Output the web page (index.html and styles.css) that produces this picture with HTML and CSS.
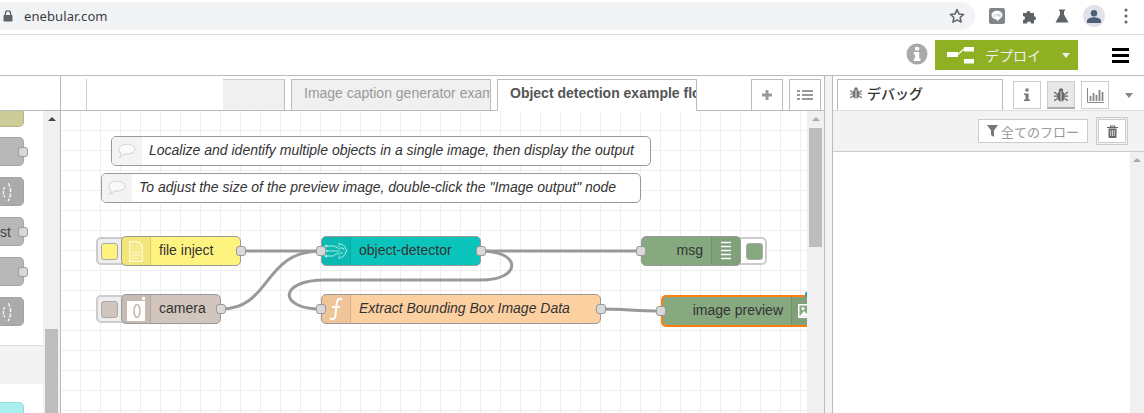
FILE: index.html
```html
<!DOCTYPE html>
<html lang="ja">
<head>
<meta charset="utf-8">
<title>enebular</title>
<link rel="stylesheet" href="styles.css">
</head>
<body>
<div class="chrome">
  <div class="omnibox">
    <svg class="lock" width="10" height="12" viewBox="0 0 10 12"><path d="M2.400 5V3.400a2.600 2.600 0 0 1 5.200 0V5" fill="none" stroke="#5f6368" stroke-width="1.300"/><rect x="0.500" y="5" width="9" height="6.500" rx="1" fill="#5f6368"/></svg>
    <span class="url">enebular.com</span>
    <svg class="star" width="16" height="16" viewBox="0 0 16 16"><path d="M8 1.600l1.900 4.300 4.700.5-3.500 3.100 1 4.600L8 11.800l-4.100 2.300 1-4.600L1.400 6.400l4.700-.5z" fill="none" stroke="#5f6368" stroke-width="1.500" stroke-linejoin="round"/></svg>
  </div>
  <div class="ext">
    <svg width="16" height="16" viewBox="0 0 16 16"><rect width="16" height="16" rx="2" fill="#80868b"/><path d="M8 2.800c3.100 0 5.500 1.900 5.500 4.300 0 2.300-3.300 4.500-5.500 6.100 0-1.200-.3-1.700-1.300-1.900C4.200 10.900 2.500 9.200 2.500 7.100 2.500 4.700 4.900 2.800 8 2.800z" fill="#fff"/><path d="M4.800 5.800v2.600h1.300M7 5.800v2.600M8.200 8.400V5.800l1.700 2.600V5.800M12 5.800h-1.300v2.600H12M10.700 7.100H12" fill="none" stroke="#b9bcbf" stroke-width=".6"/></svg>
    <svg width="16" height="16" viewBox="0 0 16 16"><path d="M1 5h3.500a2 2 0 1 1 4 0H12v3.200a2 2 0 1 1 0 4V15.500H9a2 2 0 1 0-4 0H1v-3.500a2 2 0 1 0 0-4z" fill="#5f6368"/></svg>
    <svg width="14" height="16" viewBox="0 0 14 16"><path d="M4 1.500h6v1.500H9v3.500L13.500 14.500H.5L5 6.500V3H4z" fill="#5f6368"/></svg>
    <span class="avatar"><svg width="14" height="14" viewBox="0 0 14 14"><circle cx="7" cy="4.200" r="3.200" fill="#4d5f75"/><path d="M0 14v-2c0-2.500 4-3.700 7-3.700s7 1.200 7 3.700v2z" fill="#4d5f75"/></svg></span>
    <svg width="4" height="16" viewBox="0 0 4 16"><circle cx="2" cy="2" r="1.500" fill="#5f6368"/><circle cx="2" cy="8" r="1.500" fill="#5f6368"/><circle cx="2" cy="14" r="1.500" fill="#5f6368"/></svg>
  </div>
</div>

<header class="topbar">
  <svg class="info" width="22" height="22" viewBox="0 0 22 22"><circle cx="11" cy="11" r="10.500" fill="#aaa"/><rect x="9" y="4" width="4.200" height="3.500" rx="1" fill="#fff"/><path d="M7.800 9h5.400v6.500h1.200V18H7.800v-2.500H9V11.500H7.800z" fill="#fff"/></svg>
  <div class="deploy">
    <svg class="deploy-icon" width="28" height="18" viewBox="0 0 28 18"><rect x="0" y="6" width="11" height="5" fill="#fff"/><rect x="17" y="1" width="10" height="4.500" fill="#fff"/><rect x="17" y="13" width="10" height="4.500" fill="#fff"/><path d="M11 8.500 L17 3" stroke="#fff" stroke-width="1.200" fill="none"/></svg>
    <span class="deploy-label">デプロイ</span>
    <span class="caret caret-white"></span>
  </div>
  <div class="burger"><i></i><i></i><i></i></div>
</header>

<main class="app">
  <aside class="palette">
    <div class="palette-head"></div>
    <div class="palette-main">
      <div class="palette-list">
        <div class="pnode pnode-first"></div>
        <div class="pnode"><b class="pport"></b></div>
        <div class="pnode pnode-dark"><svg width="10" height="20" viewBox="0 0 10 20"><path d="M2.500 5C1 8 1 12 2.500 15" stroke="#fff" stroke-width="1.300" stroke-dasharray="3 1.200" fill="none"/><path d="M6 1C9.500 6 9.500 14 6 19" stroke="#fff" stroke-width="1.300" stroke-dasharray="4 1.500" fill="none"/></svg></div>
        <div class="pnode pnode-text"><span>st</span><b class="pport"></b></div>
        <div class="pnode"><b class="pport"></b></div>
        <div class="pnode pnode-dark"><svg width="10" height="20" viewBox="0 0 10 20"><path d="M2.500 5C1 8 1 12 2.500 15" stroke="#fff" stroke-width="1.300" stroke-dasharray="3 1.200" fill="none"/><path d="M6 1C9.500 6 9.500 14 6 19" stroke="#fff" stroke-width="1.300" stroke-dasharray="4 1.500" fill="none"/></svg></div>
        <div class="pcat"></div>
        <div class="pnode pnode-cyan"></div>
      </div>
      <div class="vscroll vscroll-palette"><span class="up"></span><span class="thumb"></span></div>
    </div>
  </aside>

  <section class="workspace">
    <div class="tabbar">
      <div class="tab tab-blank"><span class="tab-blank-grey"></span></div>
      <div class="tab tab-grey"><span>Image caption generator example flow</span></div>
      <div class="tab tab-active"><span>Object detection example flow</span></div>
      <div class="tab-btn tab-btn-add"><svg width="12" height="12" viewBox="0 0 12 12"><path d="M6 1v10M1 6h10" stroke="#999" stroke-width="3"/></svg></div>
      <div class="tab-btn"><svg width="16" height="12" viewBox="0 0 16 12"><path d="M5 2h11M5 6h11M5 10h11M0 2h3M0 6h3M0 10h3" stroke="#999" stroke-width="2"/></svg></div>
    </div>
    <div class="canvas-row">
      <div class="canvas">
        <svg class="wires" width="760" height="302" viewBox="61 111 760 302">
          <g fill="none" stroke="#999" stroke-width="3">
            <path d="M241 251 L321 251"/>
            <path d="M221 309 C272 309 262 251 321 251"/>
            <path d="M481 251 C522 251 522 280 481 280 L325 280 C278 280 278 309 321 309"/>
            <path d="M481 251 L641 251"/>
            <path d="M601 309 C625 309 635 311 661 311"/>
          </g>
        </svg>

        <div class="comment c1"><span class="c-ico"><svg width="20" height="18" viewBox="0 0 22 20"><path d="M11 2.500c5 0 9 2.300 9 5.500s-4 5.500-9 5.500c-1 0-2 0-3-.3C6.500 15 4.500 16.500 2.500 17c1-1 1.700-2.500 1.800-4.500C2.800 11.500 2 9.800 2 8c0-3.200 4-5.500 9-5.500z" fill="#fafafa" stroke="#d8d8d8" stroke-width="1.200"/></svg></span><span class="c-txt">Localize and identify multiple objects in a single image, then display the output</span></div>
        <div class="comment c2"><span class="c-ico"><svg width="20" height="18" viewBox="0 0 22 20"><path d="M11 2.500c5 0 9 2.300 9 5.500s-4 5.500-9 5.500c-1 0-2 0-3-.3C6.500 15 4.500 16.500 2.500 17c1-1 1.700-2.500 1.800-4.500C2.800 11.500 2 9.800 2 8c0-3.200 4-5.500 9-5.500z" fill="#fafafa" stroke="#d8d8d8" stroke-width="1.200"/></svg></span><span class="c-txt">To adjust the size of the preview image, double-click the "Image output" node</span></div>

        <div class="btn-l b-inject"><i class="yellow"></i></div>
        <div class="node n-inject"><span class="n-ico"><svg width="14" height="21" viewBox="0 0 14 21"><path d="M.7.700h8.500l4.100 4.100v15.500H.7z" fill="rgba(255,255,255,.15)" stroke="#fffbd0" stroke-width="1.300"/><path d="M3 11h8M3 14h8M3 17h6" fill="none" stroke="#fffbd0" stroke-width="1"/></svg></span><span class="n-lab">file inject</span><b class="port pr"></b></div>

        <div class="btn-l b-camera"><i class="brown"></i></div>
        <div class="node n-camera"><span class="n-ico"><svg width="18" height="24" viewBox="0 0 18 24"><rect x="0" y="4" width="18" height="20" fill="#fff"/><rect x="15" y="0" width="3" height="3" fill="#fff"/><ellipse cx="10" cy="14" rx="3" ry="6.500" fill="none" stroke="#c8b9ae" stroke-width="1.600"/></svg></span><span class="n-lab">camera</span><b class="port pr"></b></div>

        <div class="node n-object"><b class="port pl"></b><span class="n-ico"><svg width="24" height="18" viewBox="0 0 24 18"><g fill="none" stroke="#d5f6f3" stroke-width=".8"><path d="M2 4h8l4 2M2 9h12M2 14h7l5-3"/><path d="M15 1v16" stroke-dasharray="1.500 1"/><path d="M15 2c4 0 6 1.500 6.500 4.500L23 9l-1.500 1c0 3-2 5-6.500 6"/><path d="M16 6h3l1 2M16 11h3"/><circle cx="2" cy="4" r="1"/><circle cx="2" cy="9" r="1"/><circle cx="2" cy="14" r="1"/></g></svg></span><span class="n-lab">object-detector</span><b class="port pr"></b></div>

        <div class="node n-func"><b class="port pl"></b><span class="n-ico"><svg width="14" height="24" viewBox="0 0 14 24"><path d="M13 2.500C9 .5 8 3 7.500 8L6.500 18C6 23 3 23 1 21M3 10h8" fill="none" stroke="#fff" stroke-width="2"/></svg></span><span class="n-lab n-it">Extract Bounding Box Image Data</span><b class="port pr"></b></div>

        <div class="btn-r b-msg"><i class="green"></i></div>
        <div class="node n-msg"><b class="port pl"></b><span class="n-lab n-right">msg</span><span class="n-ico n-ico-r"><svg width="12" height="20" viewBox="0 0 12 20"><path d="M1 1.500h10M1 5.500h10M1 9.500h10M1 13.500h10M1 17.500h10" stroke="#fff" stroke-width="1.600"/></svg></span></div>

        <div class="node n-preview"><b class="port pl"></b><span class="n-lab n-right">image preview</span><span class="n-ico n-ico-r"><svg width="18" height="16" viewBox="0 0 18 16"><rect x="1" y="1" width="16" height="14" fill="#fff"/><rect x="2.500" y="2.500" width="13" height="11" fill="#87a980"/><path d="M2.500 13.500 7 8l3 3 2-2 3.500 4.500z" fill="#fff"/><circle cx="6" cy="5.500" r="1.500" fill="#fff"/></svg></span></div>
        <span class="status-dot"></span>
      </div>
      <div class="vscroll vscroll-canvas"><span class="up"></span><span class="thumb"></span></div>
    </div>
  </section>

  <div class="sep"></div>

  <aside class="sidebar">
    <div class="side-tabs">
      <div class="side-tab">
        <svg width="12" height="12" viewBox="0 0 12 12"><g fill="#777"><ellipse cx="6" cy="7" rx="3.300" ry="4.500"/><circle cx="6" cy="2" r="1.800"/></g><path d="M0 3.500l3 2M12 3.500l-3 2M0 7h3M12 7H9M0 11l3-2M12 11L9 9" stroke="#777" stroke-width="1.100"/><path d="M6 3v8.500" stroke="#fff" stroke-width=".8"/></svg>
        <span>デバッグ</span>
      </div>
      <div class="side-btn"><svg width="8" height="14" viewBox="0 0 8 14"><rect x="2.500" y="0.500" width="3" height="3" fill="#777"/><path d="M1 5.500h4.500v6H7V13H1v-1.500h1.500v-4.500H1z" fill="#777"/></svg></div>
      <div class="side-btn side-btn-on"><svg width="14" height="14" viewBox="0 0 12 12"><g fill="#666"><ellipse cx="6" cy="7" rx="3.300" ry="4.500"/><circle cx="6" cy="2" r="1.800"/></g><path d="M0 3.500l3 2M12 3.500l-3 2M0 7h3M12 7H9M0 11l3-2M12 11L9 9" stroke="#666" stroke-width="1.100"/><path d="M6 3v8.500" stroke="#e8e8e8" stroke-width=".8"/></svg></div>
      <div class="side-btn"><svg width="17" height="15" viewBox="0 0 17 15"><path d="M.5 0v14.500H17" fill="none" stroke="#888"/><path d="M3.500 8v5M6.500 5v8M9.500 7v6M12.500 2v11M15.500 4v9" stroke="#888" stroke-width="1.800"/></svg></div>
      <span class="caret caret-grey"></span>
    </div>
    <div class="side-tools">
      <div class="filter"><svg width="11" height="12" viewBox="0 0 11 12"><path d="M0 0h11L7 5.500V12L4 10V5.500z" fill="#777"/></svg><span>全てのフロー</span></div>
      <div class="trash"><span><svg width="11" height="13" viewBox="0 0 11 13"><path d="M0 2.500h11M3.500 2.500V1h4v1.500" fill="none" stroke="#666" stroke-width="1.200"/><path d="M1.500 3.500h8v8.500a1 1 0 0 1-1 1h-6a1 1 0 0 1-1-1z" fill="#666"/><path d="M3.700 5v6M5.500 5v6M7.300 5v6" stroke="#fff" stroke-width=".7"/></svg></span></div>
    </div>
    <div class="side-body">
      <div class="vscroll vscroll-side"><span class="up"></span></div>
    </div>
  </aside>
</main>
</body>
</html>
```
FILE: styles.css
```css
* { box-sizing: border-box; }
html, body { margin: 0; padding: 0; }
body {
  width: 1144px;
  height: 413px;
  overflow: hidden;
  background: #fff;
  font-family: "Liberation Sans", "Noto Sans CJK JP", sans-serif;
  font-size: 14px;
  color: #333;
}

/* browser chrome */
.chrome {
  height: 35px;
  display: flex;
  align-items: flex-start;
  border-bottom: 1px solid #dadce0;
  padding-top: 2px;
}
.omnibox {
  width: 975px;
  height: 28px;
  background: #f1f3f4;
  border-radius: 0 14px 14px 0;
  display: flex;
  align-items: center;
  padding: 0 10px 0 3px;
}
.url {
  margin-left: 11px;
  font-family: "Noto Sans", sans-serif;
  font-size: 13px;
  letter-spacing: 0.1px;
  color: #3c4043;
}
.star { margin-left: auto; }
.ext {
  display: flex;
  align-items: center;
  height: 28px;
  margin-left: 14px;
}
.ext > svg:nth-child(1) { margin-right: 17px; }
.ext > svg:nth-child(2) { margin-right: 17px; }
.ext > svg:nth-child(3) { margin-right: 14px; }
.avatar {
  width: 22px;
  height: 22px;
  border-radius: 50%;
  background: #dfe3e9;
  display: flex;
  align-items: center;
  justify-content: center;
  margin-right: 19px;
}

/* editor header */
.topbar {
  height: 41px;
  display: flex;
  align-items: flex-start;
  border-bottom: 1px solid #bbb;
  padding-top: 5px;
}
.info { margin: 3px 7px 0 auto; }
.deploy {
  width: 143px;
  height: 30px;
  background: #8fb022;
  display: flex;
  align-items: center;
  color: #eee;
}
.deploy-icon { margin-left: 12px; }
.deploy-label { margin-left: 10px; font-size: 14px; }
.caret {
  width: 0;
  height: 0;
  border-left: 4px solid transparent;
  border-right: 4px solid transparent;
  border-top: 5px solid #eee;
}
.caret-white { margin-left: 21px; }
.burger {
  width: 17px;
  margin: 8px 15px 0 34px;
  display: flex;
  flex-direction: column;
  gap: 3px;
}
.burger i { display: block; height: 3px; background: #000; }

/* main layout */
.app {
  display: flex;
  height: 337px;
  overflow: hidden;
}

/* palette */
.palette {
  width: 61px;
  display: flex;
  flex-direction: column;
  border-right: 1px solid #bbb;
  flex: none;
}
.palette-head {
  height: 35px;
  flex: none;
  border-bottom: 1px solid #bbb;
}
.palette-main { flex: 1; display: flex; min-height: 0; }
.palette-list {
  width: 43px;
  flex: none;
  overflow: hidden;
}
.pnode {
  width: 24px;
  height: 29px;
  background: #b8b8b8;
  border: 1px solid #a3a3a3;
  border-left: 0;
  border-radius: 0 5px 5px 0;
  margin-bottom: 11px;
  position: relative;
  display: flex;
  align-items: center;
  justify-content: flex-end;
  padding-right: 11px;
}
.pnode-first {
  height: 16px;
  margin-bottom: 10px;
  background: #cccc99;
  border-color: #b5b58a;
  border-top: 0;
  border-radius: 0 0 5px 0;
}
.pnode-dark { background: #ababab; }
.pnode-text { justify-content: flex-start; padding: 0; font-size: 14px; color: #444; }
.pport {
  position: absolute;
  right: -5px;
  top: 9px;
  width: 10px;
  height: 10px;
  background: #d9d9d9;
  border: 1px solid #999;
  border-radius: 3px;
}
.pcat {
  height: 39px;
  width: 43px;
  margin: 19px 0 18px;
  background: #f3f3f3;
  border-top: 1px solid #ddd;
}
.pnode-cyan { background: #aaeeee; border-color: #98d8d8; }

.vscroll { background: #f0f0f0; position: relative; flex: none; }
.vscroll-palette { width: 17px; }
.vscroll-palette .thumb { top: 218px; bottom: 0; left: 2px; width: 13px; }
.thumb { position: absolute; background: #bdbdbd; display: block; }
.up {
  position: absolute;
  top: 6px;
  left: 50%;
  margin-left: -4px;
  width: 0;
  height: 0;
  border-left: 4px solid transparent;
  border-right: 4px solid transparent;
  border-bottom: 4px solid #444;
}

/* workspace */
.workspace {
  width: 764px;
  flex: none;
  display: flex;
  flex-direction: column;
  border-right: 1px solid #bbb;
}
.tabbar {
  height: 35px;
  flex: none;
  display: flex;
  align-items: flex-end;
  border-bottom: 1px solid #bbb;
  padding: 0 3px 0 25px;
}
.tab {
  height: 32px;
  margin-bottom: -1px;
  border: 1px solid #bbb;
  overflow: hidden;
  white-space: nowrap;
  font-size: 14px;
  line-height: 27px;
  width: 200px;
  flex: none;
}
.tab-blank {
  width: 199px;
  margin-right: 6px;
  border-top: 0;
  border-left: 1px solid #ccc;
  position: relative;
  background: #fff;
}
.tab-blank-grey {
  position: absolute;
  left: 136px;
  right: 0;
  top: 0;
  height: 100%;
  background: #f0f0f0;
  border-top: 1px solid #ccc;
}
.tab-grey {
  background: #f0f0f0;
  color: #999;
  margin-right: 6px;
  padding-left: 12px;
}
.tab-active {
  background: #fff;
  font-weight: 700;
  color: #555;
  border-bottom-color: #fff;
  padding-left: 12px;
}
.tab-btn {
  width: 32px;
  height: 31px;
  margin-left: 6px;
  border: 1px solid #bbb;
  border-bottom: 0;
  display: flex;
  align-items: center;
  justify-content: center;
  flex: none;
  background: #fff;
}
.tab-btn-add { margin-left: auto; }

.canvas-row { flex: 1; display: flex; min-height: 0; }
.canvas {
  width: 746px;
  position: relative;
  overflow: hidden;
  background-color: #fff;
  background-image:
    linear-gradient(#eee 1px, transparent 1px),
    linear-gradient(90deg, #eee 1px, transparent 1px);
  background-size: 20px 20px;
  background-position: 19px 19px;
}
.vscroll-canvas { width: 17px; }
.vscroll-canvas .up { border-bottom-color: #aaa; }
.vscroll-canvas .thumb { top: 17px; height: 119px; left: 2px; width: 13px; }

.wires { position: absolute; left: 0; top: 0; }

/* comments: positions on the flow canvas */
.comment {
  position: absolute;
  width: 540px;
  height: 30px;
  background: #fff;
  border: 1px solid #999;
  border-radius: 5px;
  display: flex;
  align-items: center;
  overflow: hidden;
  font-style: italic;
  color: #333;
  white-space: nowrap;
}
.c1 { left: 50px; top: 25px; }
.c2 { left: 40px; top: 62px; }
.c-ico {
  width: 30px;
  height: 100%;
  background: #f3f3f3;
  display: flex;
  align-items: center;
  justify-content: center;
  flex: none;
}
.c-txt { margin-left: 7px; padding-bottom: 2px; }

/* nodes */
.node {
  position: absolute;
  height: 30px;
  border: 1px solid #999;
  border-radius: 5px;
  display: flex;
  align-items: center;
  white-space: nowrap;
  color: #333;
}
.n-ico {
  width: 29px;
  height: 100%;
  flex: none;
  display: flex;
  align-items: center;
  justify-content: center;
  background: rgba(0, 0, 0, 0.05);
  border-right: 1px solid rgba(0, 0, 0, 0.1);
  border-radius: 4px 0 0 4px;
}
.n-ico-r {
  border-right: 0;
  border-left: 1px solid rgba(0, 0, 0, 0.1);
  border-radius: 0 4px 4px 0;
}
.n-lab { margin-left: 8px; padding-bottom: 2px; }
.n-it { font-style: italic; }
.n-right { margin-left: auto; margin-right: 8px; }

.n-inject { left: 60px; top: 125px; width: 120px; background: #fff380; }
.n-camera { left: 60px; top: 183px; width: 100px; background: #d2c5bd; }
.n-object { left: 260px; top: 125px; width: 160px; background: #0bc4bc; }
.n-func { left: 260px; top: 183px; width: 280px; background: #fdd0a2; }
.n-msg { left: 580px; top: 125px; width: 100px; background: #87a980; }
.n-preview { left: 600px; top: 184px; width: 160px; height: 32px; background: #87a980; border: 2px solid #ff7f0e; }
.n-preview .n-ico-r { width: 28px; }

.port {
  position: absolute;
  width: 10px;
  height: 10px;
  top: 9px;
  background: #d9d9d9;
  border: 1px solid #999;
  border-radius: 3px;
}
.pr { right: -6px; }
.pl { left: -6px; }
.n-preview .pl { left: -7px; top: 9px; }

.btn-l, .btn-r {
  position: absolute;
  top: 126px;
  width: 32px;
  height: 28px;
  border: 2px solid #ccc;
  display: flex;
  align-items: center;
  border-radius: 5px;
}
.btn-l { left: 35px; padding-left: 3px; background: #eee; }
.btn-r { left: 674px; padding-left: 9px; background: #fff; }
.b-camera { top: 184px; }
.btn-l i, .btn-r i {
  display: block;
  width: 17px;
  height: 17px;
  border: 1px solid #aaa;
  border-radius: 3px;
}
.yellow { background: #fff380; }
.brown { background: #d2c5bd; }
.green { background: #87a980; }
.status-dot {
  position: absolute;
  right: -5px;
  top: 180px;
  width: 7px;
  height: 7px;
  border-radius: 50%;
  background: #2a93c4;
}

/* separator + sidebar */
.sep {
  width: 8px;
  flex: none;
  background: #f3f3f3;
  border-right: 1px solid #bbb;
}
.sidebar { flex: 1; display: flex; flex-direction: column; min-width: 0; }
.side-tabs {
  height: 35px;
  flex: none;
  display: flex;
  align-items: flex-end;
  padding-left: 4px;
}
.side-tab {
  width: 166px;
  height: 32px;
  border: 1px solid #bbb;
  border-bottom: 0;
  display: flex;
  align-items: center;
  padding: 0 0 5px 12px;
  gap: 5px;
  color: #333;
  font-weight: 500;
  background: #fff;
}
.side-btn {
  width: 28px;
  height: 28px;
  border: 1px solid #ccc;
  margin: 0 0 2px 6px;
  display: flex;
  align-items: center;
  justify-content: center;
}
.side-tab + .side-btn { margin-left: 10px; }
.side-btn-on { background: #e8e8e8; border-bottom: 2px solid #aaa; }
.caret-grey { border-top-color: #888; margin: 0 0 13px 16px; }

.side-tools {
  height: 42px;
  flex: none;
  background: #f3f3f3;
  border-bottom: 1px solid #ccc;
  border-top: 1px solid #ddd;
  display: flex;
  align-items: flex-start;
  padding: 8px 16px 0 145px;
  margin-top: -1px;
}
.filter {
  width: 110px;
  height: 24px;
  background: #fff;
  border: 1px solid #ccc;
  display: flex;
  align-items: center;
  padding-left: 8px;
  gap: 3px;
  font-size: 13px;
  color: #999;
  white-space: nowrap;
}
.trash {
  width: 32px;
  height: 28px;
  margin: -2px 0 0 8px;
  border: 1px solid #ccc;
  padding: 1px;
  background: #f3f3f3;
}
.trash span {
  display: flex;
  width: 100%;
  height: 100%;
  background: #fff;
  border: 1px solid #ccc;
  align-items: center;
  justify-content: center;
}
.side-body { flex: 1; display: flex; justify-content: flex-end; }
.vscroll-side { width: 14px; }
.vscroll-side .up { border-bottom-color: #aaa; }
```
